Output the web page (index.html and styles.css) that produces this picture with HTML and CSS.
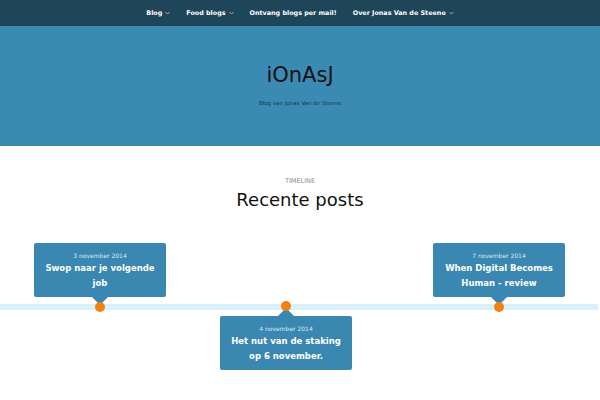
FILE: index.html
```
<!DOCTYPE html>
<html lang="nl">
<head>
  <meta charset="UTF-8">
  <meta name="viewport" content="width=device-width, initial-scale=1.0">
  <title>iOnAsJ</title>
  <link rel="stylesheet" href="styles.css">
</head>
<body>
  <nav class="topnav">
    <a class="nav-item" href="#">Blog <svg class="chev" width="5" height="4" viewBox="0 0 5 4"><polyline points="0.5,1 2.5,3 4.5,1"/></svg></a>
    <a class="nav-item" href="#">Food blogs <svg class="chev" width="5" height="4" viewBox="0 0 5 4"><polyline points="0.5,1 2.5,3 4.5,1"/></svg></a>
    <a class="nav-item" href="#">Ontvang blogs per mail!</a>
    <a class="nav-item" href="#">Over Jonas Van de Steene <svg class="chev" width="5" height="4" viewBox="0 0 5 4"><polyline points="0.5,1 2.5,3 4.5,1"/></svg></a>
  </nav>

  <header class="site-header">
    <h1 class="site-title">iOnAsJ</h1>
    <p class="site-desc">Blog van Jonas Van de Steene</p>
  </header>

  <section class="recent">
    <div class="kicker">TIMELINE</div>
    <h2 class="recent-title">Recente posts</h2>

    <div class="timeline">
      <div class="track"></div>

      <!-- posts op de tijdlijn -->
      <div class="entry up e1">
        <div class="card">
          <div class="date">3 november 2014</div>
          <div class="post">Swop naar je volgende job</div>
        </div>
        <span class="dot"></span>
      </div>

      <div class="entry down e2">
        <div class="card">
          <div class="date">4 november 2014</div>
          <div class="post">Het nut van de staking op 6 november.</div>
        </div>
        <span class="dot"></span>
      </div>

      <div class="entry up e3">
        <div class="card">
          <div class="date">7 november 2014</div>
          <div class="post">When Digital Becomes Human - review</div>
        </div>
        <span class="dot"></span>
      </div>
    </div>
  </section>
</body>
</html>
```
FILE: styles.css
```
body, html {
  margin: 0;
  padding: 0;
  background: #fff;
  font-family: "DejaVu Sans", Verdana, sans-serif;
}
.topnav {
  height: 26px;
  background: #1e4558;
  display: flex;
  justify-content: center;
  align-items: center;
  gap: 16px;
}
.nav-item {
  color: #fff;
  text-decoration: none;
  font-size: 6.4px;
  font-weight: bold;
  display: flex;
  align-items: center;
  gap: 3px;
}
.chev {
  fill: none;
  stroke: #b9c8d0;
  stroke-width: 0.8;
}
.site-header {
  height: 120px;
  background: #3a8ab3;
  text-align: center;
  box-sizing: border-box;
  padding-top: 36px;
}
.site-title {
  margin: 0;
  font-size: 21px;
  font-weight: normal;
  line-height: 26px;
  color: #111;
}
.site-desc {
  margin: 10px 0 0;
  font-size: 5.5px;
  line-height: 10px;
  color: #1b3a4a;
}
.recent {
  text-align: center;
  padding-top: 30px;
}
.kicker {
  font-size: 6.5px;
  line-height: 10px;
  color: #8a8a8a;
}
.recent-title {
  margin: 2px 0 0;
  font-size: 18px;
  font-weight: normal;
  line-height: 24px;
  color: #111;
}
.timeline {
  position: relative;
  height: 140px;
  margin-top: 24px;
}
.track {
  position: absolute;
  left: 0;
  right: 2px;
  top: 68px;
  height: 6px;
  background: #daf0fa;
}
.entry {
  position: absolute;
  width: 132px;
}
.e1 { left: 34px; }
.e2 { left: 220px; }
.e3 { left: 433px; }
.entry.up .card { margin-top: 7px; }
.entry.down .card { margin-top: 80px; }
.card {
  position: relative;
  background: #3a87b1;
  border-radius: 2px;
  padding: 7px 6px 6px;
  color: #fff;
}
.card::after {
  content: "";
  position: absolute;
  left: 58px;
  border-left: 8px solid transparent;
  border-right: 8px solid transparent;
}
.up .card::after {
  top: 100%;
  border-top: 8px solid #3a87b1;
}
.down .card::after {
  bottom: 100%;
  border-bottom: 8px solid #3a87b1;
}
.date {
  font-size: 6px;
  line-height: 11px;
  color: #dcebf3;
}
.post {
  font-size: 8.5px;
  font-weight: bold;
  line-height: 15px;
}
.dot {
  position: absolute;
  left: 61px;
  top: 66px;
  width: 10px;
  height: 10px;
  border-radius: 50%;
  background: #f08212;
}
.e2 .dot { left: 61px; top: 65px; }
```
